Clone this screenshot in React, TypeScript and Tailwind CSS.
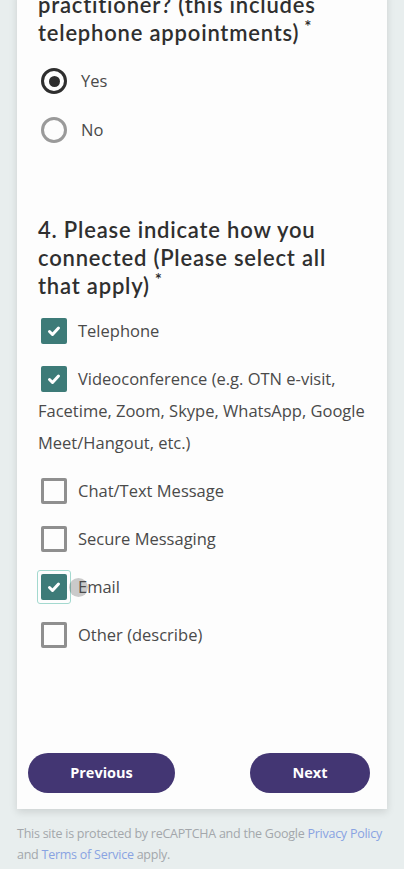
import React from "react"

const head = "font-['Lato','Noto_Sans',sans-serif] text-[22px] font-semibold leading-[28px] text-[#2f2f2f] tracking-[0.8px]"
const body = "font-['Open_Sans','Noto_Sans',sans-serif] text-[16.5px] text-[#4a4a4a]"

function Check({ checked, focused }: { checked: boolean; focused?: boolean }) {
  return (
    <span className="relative -mt-[3px] ml-[3px] mr-[11px] inline-block h-[26px] w-[26px] align-middle">
      {focused && (
        <span className="absolute -left-[4px] -top-[4px] h-[34px] w-[34px] rounded-[3px] border border-[#a3d9cf]" />
      )}
      {checked ? (
        <span className="absolute inset-0 flex items-center justify-center rounded-[2px] bg-[#3d7b78]">
          <svg width="16" height="16" viewBox="0 0 16 16" fill="none">
            <path d="M3.5 8.5l3 3L12.5 5" stroke="#fff" strokeWidth="3" strokeLinecap="round" strokeLinejoin="round" />
          </svg>
        </span>
      ) : (
        <span className="absolute inset-0 rounded-[2px] border-[3px] border-[#8f8f8f]" />
      )}
      {focused && (
        <span className="absolute left-[28px] top-[4px] h-[19px] w-[19px] rounded-full bg-black/20" />
      )}
    </span>
  )
}

function Option({ label, checked, focused }: { label: string; checked: boolean; focused?: boolean }) {
  return (
    <div className={`${body} leading-[32px]`}>
      <Check checked={checked} focused={focused} />
      <span className="relative">{label}</span>
    </div>
  )
}

function Radio({ label, selected }: { label: string; selected: boolean }) {
  return (
    <div className="flex items-center gap-[14px] pl-[3px]">
      {selected ? (
        <span className="flex h-[26px] w-[26px] items-center justify-center rounded-full border-[3px] border-[#2e2e2e]">
          <span className="h-[11px] w-[11px] rounded-full bg-[#2e2e2e]" />
        </span>
      ) : (
        <span className="h-[26px] w-[26px] rounded-full border-[3px] border-[#9a9a9a]" />
      )}
      <span className={body}>{label}</span>
    </div>
  )
}

export default function App() {
  return (
    <div className="h-[869px] overflow-hidden bg-[#e8eeee]">
      <div className="mx-[17px] bg-[#fdfdfd] shadow-[0_3px_8px_rgba(0,0,0,0.12)]">
        <div className="px-[21px]">
          <h2 className={`${head} -mt-[9px]`}>
            practitioner? (this includes telephone appointments)
            <sup className="ml-[5px] text-[17px]">*</sup>
          </h2>
          <div className="mt-[21px] flex flex-col gap-[23px]">
            <Radio label="Yes" selected />
            <Radio label="No" selected={false} />
          </div>

          <h2 className={`${head} mt-[73px]`}>
            4. Please indicate how you connected (Please select all that apply)
            <sup className="ml-[5px] text-[17px]">*</sup>
          </h2>
          <div className="mt-[15px] flex flex-col gap-[16px]">
            <Option label="Telephone" checked />
            <Option label="Videoconference (e.g. OTN e-visit, Facetime, Zoom, Skype, WhatsApp, Google Meet/Hangout, etc.)" checked />
            <Option label="Chat/Text Message" checked={false} />
            <Option label="Secure Messaging" checked={false} />
            <Option label="Email" checked focused />
            <Option label="Other (describe)" checked={false} />
          </div>
        </div>

        <div className="mt-[102px] flex justify-between pb-[16px] pl-[11px] pr-[17px]">
          <button className="h-[40px] w-[147px] rounded-full bg-[#433673] font-['Open_Sans',sans-serif] text-[14.5px] font-bold text-white">
            Previous
          </button>
          <button className="h-[40px] w-[120px] rounded-full bg-[#433673] font-['Open_Sans',sans-serif] text-[14.5px] font-bold text-white">
            Next
          </button>
        </div>
      </div>

      <p className="mx-[17px] mt-[14px] font-['Open_Sans',sans-serif] text-[12.5px] leading-[21px] tracking-[-0.25px] text-[#a3a7ab]">
        This site is protected by reCAPTCHA and the Google <a className="text-[#89a3e2]">Privacy Policy</a> and{" "}
        <a className="text-[#89a3e2]">Terms of Service</a> apply.
      </p>
    </div>
  )
}
